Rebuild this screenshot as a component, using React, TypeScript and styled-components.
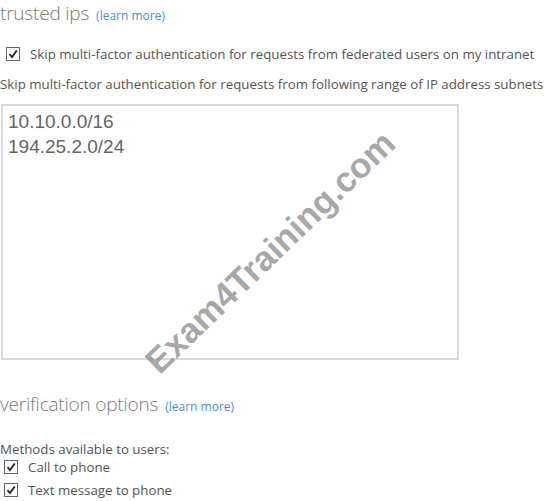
import React from 'react';
import styled, { createGlobalStyle } from 'styled-components';

const GlobalStyle = createGlobalStyle`
  html, body {
    margin: 0;
    padding: 0;
    background: #ffffff;
  }
  body {
    font-family: "Open Sans", "Noto Sans", sans-serif;
    color: #555;
  }
`;

const Page = styled.div`
  position: relative;
  width: 545px;
  height: 501px;
  overflow: hidden;
`;

const Heading = styled.h2<{ $top: number }>`
  margin: ${(p) => p.$top}px 0 0 0;
  font-family: "Open Sans", sans-serif;
  font-weight: 300;
  font-size: 19px;
  letter-spacing: -0.2px;
  line-height: 24px;
  color: #7a7a7a;
  display: flex;
  align-items: baseline;
  gap: 7px;
`;

const LearnMore = styled.a`
  font-size: 12px;
  font-weight: 400;
  letter-spacing: 0;
  color: #4a90d0;
  text-decoration: none;
`;

const CheckRow = styled.label<{ $indent: number; $top: number }>`
  display: flex;
  align-items: center;
  gap: 10px;
  margin-top: ${(p) => p.$top}px;
  padding-left: ${(p) => p.$indent}px;
  font-size: 13.3px;
  color: #555;
  line-height: 18px;
  white-space: nowrap;
`;

const Box = styled.span`
  width: 12px;
  height: 12px;
  border: 1px solid #666;
  background: #fff;
  display: inline-flex;
  align-items: center;
  justify-content: center;
  flex: none;
`;

const Label = styled.div<{ $top: number }>`
  margin-top: ${(p) => p.$top}px;
  font-size: 13.3px;
  color: #555;
  line-height: 18px;
  white-space: nowrap;
`;

const IpBox = styled.div`
  margin: 11px 0 0 1px;
  width: 443px;
  height: 246px;
  border: 2px solid #d6dadf;
  padding: 3px 6px 3px 5px;
  font-family: "Liberation Sans", Arial, sans-serif;
  font-size: 19px;
  line-height: 25px;
  color: #666;
  box-sizing: content-box;
`;

const Section = styled.section`
  display: flex;
  flex-direction: column;
`;

const Watermark = styled.div`
  position: absolute;
  left: 270px;
  top: 252px;
  transform: translate(-50%, -50%) rotate(-44deg);
  font-family: "Liberation Sans", Arial, sans-serif;
  font-weight: 700;
  font-size: 35px;
  color: rgba(140, 140, 140, 0.75);
  white-space: nowrap;
  pointer-events: none;
`;

const Check = () => (
  <Box>
    <svg width="10" height="10" viewBox="0 0 10 10">
      <path d="M1.5 5.2 L4 8 L8.8 1.5" fill="none" stroke="#222" strokeWidth="1.8" />
    </svg>
  </Box>
);

export default function App() {
  return (
    <Page>
      <GlobalStyle />
      <Section>
        <Heading $top={1}>
          trusted ips <LearnMore>(learn more)</LearnMore>
        </Heading>
        <CheckRow $indent={6} $top={17}>
          <Check />
          Skip multi-factor authentication for requests from federated users on my intranet
        </CheckRow>
        <Label $top={12}>
          Skip multi-factor authentication for requests from following range of IP address subnets
        </Label>
        <IpBox>
          10.10.0.0/16
          <br />
          194.25.2.0/24
        </IpBox>
      </Section>
      <Section>
        <Heading $top={32}>
          verification options <LearnMore>(learn more)</LearnMore>
        </Heading>
        <Label $top={21}>Methods available to users:</Label>
        <CheckRow $indent={4} $top={0}>
          <Check />
          Call to phone
        </CheckRow>
        <CheckRow $indent={4} $top={5}>
          <Check />
          Text message to phone
        </CheckRow>
      </Section>
      <Watermark>Exam4Training.com</Watermark>
    </Page>
  );
}
